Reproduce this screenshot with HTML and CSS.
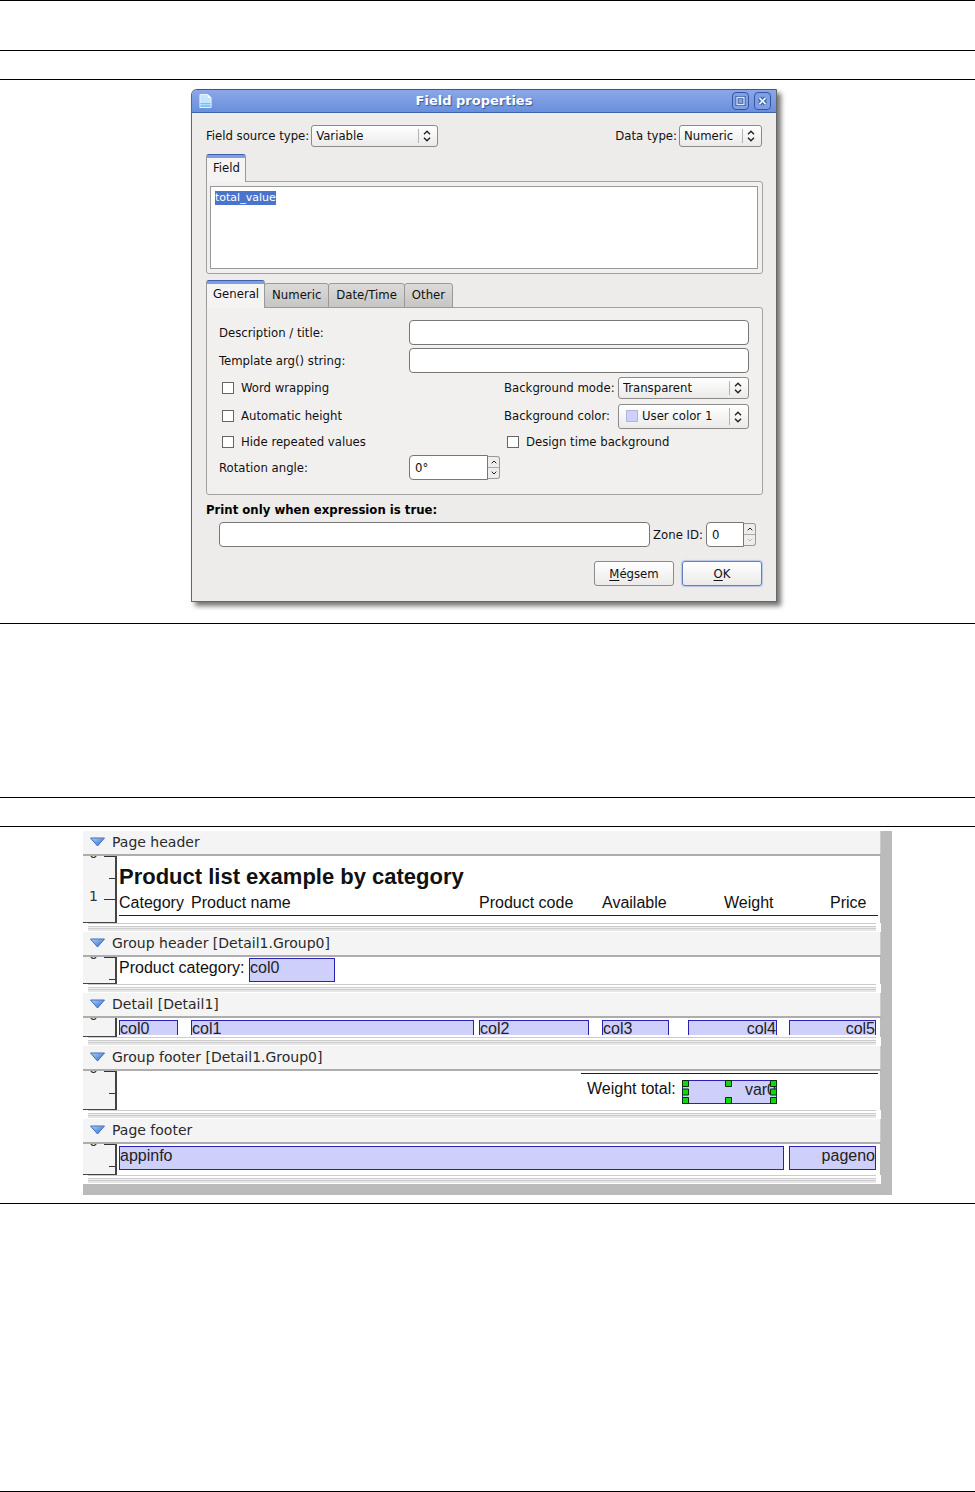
FILE: index.html
```html
<!DOCTYPE html>
<html lang="en">
<head>
<meta charset="utf-8">
<title>Field properties</title>
<link rel="stylesheet" href="styles.css">
</head>
<body>
<svg class="defs" width="0" height="0" aria-hidden="true">
  <defs>
    <linearGradient id="blue" x1="0" y1="0" x2="1" y2="1"><stop offset="0" stop-color="#b4d2fa"/><stop offset="1" stop-color="#2a66c8"/></linearGradient>
    <symbol id="updown" viewBox="0 0 8 12"><path d="M1 4.2 4 1.2 7 4.2M1 7.8 4 10.8 7 7.8" fill="none" stroke="#222" stroke-width="1.4"/></symbol>
    <symbol id="fold" viewBox="0 0 16 10"><path d="M1 1h14L8 9z" fill="url(#blue)" stroke="#3a70c4" stroke-width="1" stroke-linejoin="round"/></symbol>
    <symbol id="up" viewBox="0 0 6 4"><path d="M.7 3.3 3 1l2.300 2.300" fill="none" stroke="currentColor"/></symbol>
    <symbol id="down" viewBox="0 0 6 4"><path d="M.7.7 3 3 5.300.7" fill="none" stroke="currentColor"/></symbol>
  </defs>
</svg>
<div class="strip strip-top"></div>
<div class="strip strip-thin"></div>
<section class="strip figure-dialog">
  <form class="dialog" onsubmit="return false">
    <header class="titlebar">
      <svg class="doc-icon" viewBox="0 0 14 16" aria-hidden="true"><path d="M1 1h8.500L13 4.500V15H1z" fill="#c4e6fc" stroke="#e8f6ff"/><path d="M9.500 1v3.500H13z" fill="#fff"/><path d="M1.500 11h11M1.500 13.500h11" stroke="#58b4ee" stroke-width="1.200"/></svg>
      <h1>Field properties</h1>
      <button type="button" class="win-btn" aria-label="Maximize"><svg viewBox="0 0 15 16"><path d="M4 4.500h7v7h-7z" fill="none" stroke="#35569f" stroke-width="3"/><path d="M4 4.500h7v7h-7z" fill="none" stroke="#d8e6ff" stroke-width="1.300"/></svg></button>
      <button type="button" class="win-btn" aria-label="Close"><svg viewBox="0 0 15 16"><path d="M4.500 5l6 6M10.500 5l-6 6" stroke="#35569f" stroke-width="4"/><path d="M4.500 5l6 6M10.500 5l-6 6" stroke="#e4eeff" stroke-width="1.800"/></svg></button>
    </header>
    <div class="dialog-body">
      <div class="types">
        <label for="source">Field source type:</label>
        <span class="combo combo-source"><select id="source"><option>Variable</option></select><svg><use href="#updown"/></svg></span>
        <label for="datatype" class="push">Data type:</label>
        <span class="combo combo-data"><select id="datatype"><option>Numeric</option></select><svg><use href="#updown"/></svg></span>
      </div>
      <div class="tabs" role="tablist"><button type="button" class="tab active" role="tab" aria-selected="true">Field</button></div>
      <div class="panel panel-field"><textarea id="expr" aria-label="Field" spellcheck="false">total_value</textarea></div>
      <div class="tabs" role="tablist">
        <button type="button" class="tab active" role="tab" aria-selected="true">General</button>
        <button type="button" class="tab" role="tab">Numeric</button>
        <button type="button" class="tab" role="tab">Date/Time</button>
        <button type="button" class="tab" role="tab">Other</button>
      </div>
      <div class="panel panel-general">
        <label for="desc">Description / title:</label><input class="box wide" id="desc" type="text">
        <label for="arg">Template arg() string:</label><input class="box wide" id="arg" type="text">
        <label class="check"><input type="checkbox">Word wrapping</label>
        <label for="bgmode" class="col3">Background mode:</label>
        <span class="combo"><select id="bgmode"><option>Transparent</option></select><svg><use href="#updown"/></svg></span>
        <label class="check"><input type="checkbox">Automatic height</label>
        <label for="bgcolor" class="col3">Background color:</label>
        <span class="combo combo-color"><select id="bgcolor"><option>User color 1</option></select><i class="swatch"></i><svg><use href="#updown"/></svg></span>
        <label class="check"><input type="checkbox">Hide repeated values</label>
        <label class="check design"><input type="checkbox">Design time background</label>
        <label for="angle">Rotation angle:</label>
        <span class="spin"><input id="angle" class="box" type="text" value="0°"><span class="steps"><button type="button" aria-label="Increase angle"><svg><use href="#up"/></svg></button><button type="button" aria-label="Decrease angle"><svg><use href="#down"/></svg></button></span></span>
      </div>
      <label for="cond" class="cond-label">Print only when expression is true:</label>
      <div class="cond">
        <input class="box" id="cond" type="text">
        <label for="zone">Zone ID:</label>
        <span class="spin spin-zone"><input id="zone" class="box" type="text" value="0"><span class="steps"><button type="button" aria-label="Increase zone"><svg><use href="#up"/></svg></button><button type="button" aria-label="Decrease zone" disabled><svg><use href="#down"/></svg></button></span></span>
      </div>
      <div class="actions">
        <button type="button" class="btn"><u>M</u>égsem</button>
        <button type="button" class="btn primary"><u>O</u>K</button>
      </div>
    </div>
  </form>
</section>
<div class="strip strip-mid"></div>
<div class="strip strip-thin"></div>
<section class="strip figure-report">
  <div class="report">
    <section class="band">
      <h2><svg><use href="#fold"/></svg>Page header</h2>
      <div class="band-body page-header">
        <div class="ruler"><span class="zero">0</span><i class="tick major t0"></i><i class="tick t22"></i><span class="one">1</span><i class="tick major t44"></i></div>
        <div class="canvas">
          <strong class="title">Product list example by category</strong>
          <span class="text c0 heading">Category</span><span class="text c1 heading">Product name</span><span class="text c2 heading">Product code</span><span class="text c3 heading">Available</span><span class="text heading h4">Weight</span><span class="text heading h5">Price</span>
          <i class="rule rule-head"></i>
        </div>
      </div>
      <div class="splitter"></div>
    </section>
    <section class="band">
      <h2><svg><use href="#fold"/></svg>Group header [Detail1.Group0]</h2>
      <div class="band-body group-header">
        <div class="ruler"><span class="zero">0</span><i class="tick major t0"></i><i class="tick t22"></i></div>
        <div class="canvas"><span class="text c0 category">Product category:</span><span class="field category-field">col0</span></div>
      </div>
      <div class="splitter"></div>
    </section>
    <section class="band">
      <h2><svg><use href="#fold"/></svg>Detail [Detail1]</h2>
      <div class="band-body detail">
        <div class="ruler"><span class="zero">0</span></div>
        <div class="canvas"><span class="field open c0">col0</span><span class="field open c1">col1</span><span class="field open c2">col2</span><span class="field open c3">col3</span><span class="field open end c4">col4</span><span class="field open end c5">col5</span></div>
      </div>
      <div class="splitter"></div>
    </section>
    <section class="band">
      <h2><svg><use href="#fold"/></svg>Group footer [Detail1.Group0]</h2>
      <div class="band-body group-footer">
        <div class="ruler"><span class="zero">0</span><i class="tick major t0"></i><i class="tick t22"></i></div>
        <div class="canvas">
          <i class="rule rule-total"></i><span class="text total-label">Weight total:</span>
          <span class="field end total">var0<svg class="handles" viewBox="0 0 95 24" aria-hidden="true"><g fill="#10d810" stroke="#063006"><path d="M.5.5h6v6h-6zM43.500.5h6v6h-6zM88.500.5h6v6h-6zM.5 9h6v6h-6zM88.500 9h6v6h-6zM.5 17.500h6v6h-6zM43.500 17.500h6v6h-6zM88.500 17.500h6v6h-6z"/></g></svg></span>
        </div>
      </div>
      <div class="splitter"></div>
    </section>
    <section class="band">
      <h2><svg><use href="#fold"/></svg>Page footer</h2>
      <div class="band-body page-footer">
        <div class="ruler"><span class="zero">0</span><i class="tick major t0"></i><i class="tick t22"></i></div>
        <div class="canvas"><span class="field appinfo">appinfo</span><span class="field end c5 pageno">pageno</span></div>
      </div>
      <div class="splitter"></div>
    </section>
  </div>
</section>
<div class="strip strip-last"></div>
<script>
  const expr = document.getElementById('expr');
  expr.focus();
  expr.select();
</script>
</body>
</html>
```
FILE: styles.css
```css
* { box-sizing: border-box; }
body { margin: 0; background: #fff; color: #111; font: 13px/16px "DejaVu Sans Condensed", "DejaVu Sans", sans-serif; }
button, input, select, textarea { font: inherit; color: inherit; margin: 0; }
.defs { position: absolute; }

/* Ruled document strips */
.strip { border-top: 1px solid #000; }
.strip-top { height: 50px; }
.strip-thin { height: 29px; }
.strip-mid { height: 174px; }
.strip-last { height: 289px; border-bottom: 1px solid #000; }
.figure-dialog { padding: 9px 7px 21px 0; }
.figure-report { padding: 4px 0 8px; }

/* Dialog */
.dialog { width: 100%; max-width: 586px; margin: 0 auto; border: 1px solid #666; border-top-color: #35569f; border-radius: 6px 0 0 0; background: #edeceb; box-shadow: 4px 4px 5px rgba(0,0,0,.55); }
.titlebar { display: flex; align-items: center; gap: 5px; height: 23px; padding: 0 5px 0 7px; background: linear-gradient(#8aa8e8, #6a8fdc); border-bottom: 1px solid #3f62ad; border-radius: 5px 0 0 0; }
.titlebar h1 { flex: 1; margin: 0; padding-left: 4px; text-align: center; color: #fff; font: bold 13px/16px "DejaVu Sans", sans-serif; text-shadow: 1px 1px 1px #35569f; }
.doc-icon { width: 13px; height: 16px; }
.win-btn { width: 17px; height: 18px; padding: 0; border: 1px solid #35569f; border-radius: 4px; background: #7f9fe4; }
.win-btn svg { display: block; width: 15px; height: 16px; }
.dialog-body { padding: 12px 13px 15px 14px; }
.types { display: flex; align-items: center; gap: 2px; margin-bottom: 7px; padding-right: 1px; }
.push { margin-left: auto; }

.combo { position: relative; display: block; height: 22px; }
.combo-source { width: 127px; }
.combo-data { width: 83px; }
.combo select { appearance: none; display: block; width: 100%; height: 100%; padding: 0 24px 0 4px; border: 1px solid #8c8b89; border-radius: 3px; background: linear-gradient(#fff, #ebeae9); outline: 0; }
.combo svg { position: absolute; right: 7px; top: 5px; width: 8px; height: 12px; pointer-events: none; }
.combo::after { content: ""; position: absolute; right: 19px; top: 4px; bottom: 4px; border-left: 1px solid #b5b3b1; }
.combo-color { height: 25px; }
.combo-color select { padding-left: 23px; }
.combo-color svg { top: 7px; }
.swatch { position: absolute; left: 8px; top: 6px; width: 12px; height: 12px; background: #cfcffc; border: 1px solid #b4b4d8; }

.tabs { display: flex; align-items: flex-end; height: 28px; margin-bottom: -1px; position: relative; }
.tab { height: 25px; margin-left: -1px; padding: 0 7px 2px; border: 1px solid #999; border-radius: 3px 3px 0 0; background: linear-gradient(#dcdbda, #c6c5c3); }
.tab.active { height: 28px; margin-left: 0; padding: 0 5px 1px 6px; border-color: #999; border-top: 1px solid #3f5fae; border-bottom: 0; background: linear-gradient(#7f9de0 0 3px, #f5f4f3 3px); }
.panel { border: 1px solid #a3a19f; border-radius: 0 3px 3px 3px; background: #f1f0ef; }
.panel-field { padding: 4px 4px 4px 3px; margin-bottom: 6px; }
.panel-field textarea { display: block; width: 100%; height: 83px; padding: 4px; resize: none; border: 1px solid #999; border-radius: 0; background: #fff; outline: 0; font: 11px/14px "DejaVu Sans", sans-serif; }
.panel-field textarea::selection { background: #4a74cc; color: #fff; }

.panel-general { display: grid; grid-template-columns: 190px 95px 114px 1fr; grid-template-rows: 25px 25px 24px 26px 20px 25px; gap: 3px 0; align-items: center; padding: 12px 13px 14px 12px; }
.box { width: 100%; height: 25px; padding: 0 5px; border: 1px solid #777; border-radius: 4px; background: #fff; outline: 0; }
.wide { grid-column: 2 / 5; }
.col3 { grid-column: 3; }
.check { grid-column: 1; display: flex; align-items: center; gap: 7px; padding-left: 3px; }
.design { grid-column: 3 / 5; }
.check input { appearance: none; width: 12px; height: 12px; border: 1px solid #666; background: #fff; }
.spin { display: flex; align-items: center; width: 91px; }
.spin .box { flex: 1; min-width: 0; border-radius: 4px 0 0 4px; }
.spin-zone { width: 50px; }
.steps { width: 12px; height: 23px; display: flex; flex-direction: column; border: 1px solid #999; border-left: 0; border-radius: 0 3px 3px 0; background: #eeedec; }
.steps button { flex: 1; display: grid; place-items: center; padding: 0; border: 0; background: none; color: #222; }
.steps button + button { border-top: 1px solid #aaa; }
.steps button:disabled { color: #bbb; }
.steps svg { width: 6px; height: 4px; }

.cond-label { display: block; margin: 7px 0 4px; font-weight: bold; color: #000; }
.cond { display: flex; align-items: center; gap: 3px; padding: 0 7px 0 13px; margin-bottom: 14px; }
.cond > .box { flex: 1; min-width: 0; }
.actions { display: flex; justify-content: flex-end; gap: 8px; padding-right: 1px; }
.btn { width: 80px; height: 25px; padding: 0; border: 1px solid #8c8b89; border-radius: 3px; background: linear-gradient(#fff, #ebeae9); }
.btn.primary { border-color: #6480bb; box-shadow: 0 0 1px 1px #b6c6ea; }
.btn u { text-underline-offset: 2px; }

/* Report designer */
.report { width: 100%; max-width: 809px; margin: 0 auto; border: solid #bbb; border-width: 0 11px 11px 0; font: 16px/18px "Liberation Sans", Arial, sans-serif; background: #fff; }
.band h2 { display: flex; align-items: center; gap: 6px; height: 23px; margin: 0; padding: 0 0 2px 6px; background: #f4f4f4; border-right: 1px solid #ccc; color: #2a2a2a; font: 14px/18px "DejaVu Sans", sans-serif; }
.band h2 svg { width: 17px; height: 10px; }
.band-body { display: flex; border-top: 2px solid #adadad; border-right: 1px solid #bbb; }
.page-header { height: 69px; }
.group-header { height: 29px; }
.detail { height: 21px; }
.group-footer { height: 41px; }
.page-footer { height: 33px; }
.splitter { height: 9px; margin: 0 5px; border-top: 1px solid #ccc; background: linear-gradient(#fff 0 2px, #ccc 2px 3px, #eee 3px 4px, #ccc 4px 5px, #e6e6e6 5px 7px, #fff 7px); }
.ruler { position: relative; width: 34px; overflow: hidden; background: #f4f4f4; border-right: 2px solid #444; border-bottom: 1px solid #444; font: 14px/16px "DejaVu Sans", sans-serif; color: #333; }
.zero { position: absolute; left: 6px; top: -11px; }
.one { position: absolute; left: 6px; top: 32px; }
.tick { position: absolute; right: 0; width: 6px; height: 1px; background: #333; }
.tick.major { width: 11px; }
.t0 { top: 0; }
.t22 { top: 22px; }
.t44 { top: 43px; }
.canvas { position: relative; flex: 1; overflow: hidden; }
.canvas > * { position: absolute; white-space: nowrap; }
.title { left: 2px; top: 8px; font-size: 22px; line-height: 26px; }
.heading { top: 38px; }
.c0 { left: 2px; width: 59px; }
.c1 { left: 74px; width: 283px; }
.c2 { left: 362px; width: 110px; }
.c3 { left: 485px; width: 67px; }
.c4 { left: 571px; width: 89px; }
.c5 { left: 672px; width: 87px; }
.h4 { left: 607px; }
.h5 { left: 713px; }
.rule { height: 1px; background: #222; }
.rule-head { left: 2px; right: 2px; top: 59px; }
.rule-total { left: 464px; right: 2px; top: 2px; }
.field { height: 24px; border: 1px solid #2a22b4; background: #cfcffc; color: #222; }
.end { text-align: right; }
.open { top: 2px; height: 15px; border-bottom: 0; line-height: 16px; }
.category { top: 2px; }
.category-field { left: 132px; top: 1px; width: 86px; }
.total-label { left: 470px; top: 9px; }
.total { left: 565px; top: 9px; width: 95px; }
.handles { position: absolute; inset: -1px; width: 95px; height: 24px; }
.appinfo { left: 2px; top: 2px; width: 665px; }
.pageno { top: 2px; }
```
